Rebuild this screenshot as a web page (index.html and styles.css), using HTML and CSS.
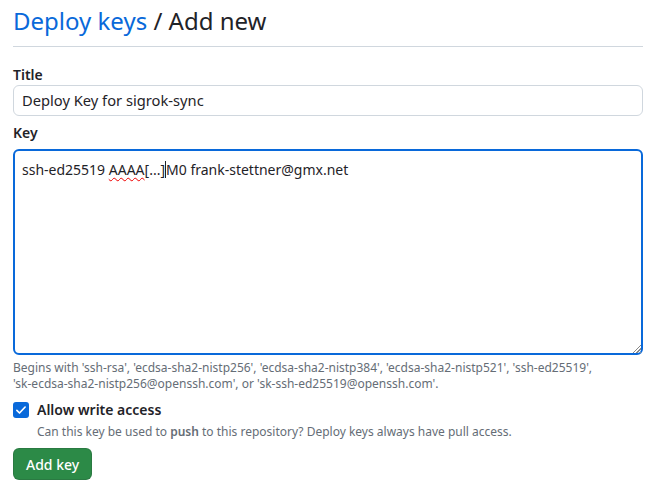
FILE: index.html
```html
<!DOCTYPE html>
<html>
<head>
<meta charset="utf-8">
<link rel="stylesheet" href="styles.css">
</head>
<body>
<div class="page">
  <div class="subhead">
    <h2 class="subhead-heading"><a href="#" class="crumb">Deploy keys</a> / Add new</h2>
  </div>
  <form class="form">
    <div class="form-group group-title">
      <label class="label label-title">Title</label>
      <div class="input">Deploy Key for sigrok-sync</div>
    </div>
    <div class="form-group group-key">
      <label class="label label-key">Key</label>
      <div class="textarea">ssh-ed25519 <span class="spell">AAAA</span>[...]<span class="caret"></span>M0 frank-stettner@gmx.net<span class="grip"></span></div>
      <p class="note">Begins with 'ssh-rsa', 'ecdsa-sha2-nistp256', 'ecdsa-sha2-nistp384', 'ecdsa-sha2-nistp521', 'ssh-ed25519', <span class="nowrap">'sk-ecdsa-sha2-nistp256@openssh.com',</span> or <span class="nowrap">'sk-ssh-ed25519@openssh.com'.</span></p>
    </div>
    <div class="check">
      <span class="checkbox"><svg width="12" height="12" viewBox="0 0 16 16"><path d="M2.5 8.5l3.5 3.5 7.5-8" fill="none" stroke="#fff" stroke-width="2.2" stroke-linecap="round" stroke-linejoin="round"/></svg></span>
      <div class="check-body">
        <div class="check-label">Allow write access</div>
        <div class="check-note">Can this key be used to <b>push</b> to this repository? Deploy keys always have pull access.</div>
      </div>
    </div>
    <button type="button" class="btn">Add key</button>
  </form>
</div>
</body>
</html>
```
FILE: styles.css
```css
* { box-sizing: border-box; }
html, body { margin: 0; background: #fff; }
body {
  font-family: "Noto Sans", "Open Sans", sans-serif;
  font-size: 14px;
  color: #1f2328;
}
.page { padding: 0 22px 0 13px; }
.subhead {
  border-bottom: 1px solid #d0d7de;
  padding: 4px 0 8px;
  margin-bottom: 18px;
}
.subhead-heading {
  margin: 0;
  font-size: 24px;
  font-weight: 400;
  line-height: 34px;
}
.crumb { color: #0969da; text-decoration: none; }
.form-group { margin: 0; }
.group-title { margin-bottom: 7px; }
.label {
  display: block;
  font-weight: 600;
  font-size: 14px;
  line-height: 20px;
}
.label-key { margin-bottom: 6px; }
.input {
  height: 31px;
  border: 1px solid #d0d7de;
  border-radius: 6px;
  padding: 0 8px;
  line-height: 29px;
  font-size: 14.7px;
  color: #1f2328;
  background: #fff;
}
.textarea {
  position: relative;
  height: 206px;
  border: 2px solid #0969da;
  border-radius: 6px;
  padding: 9px 7px;
  line-height: 20px;
  font-size: 14px;
}
.spell {
  text-decoration: underline wavy #e00;
  text-decoration-thickness: 1px;
  text-underline-offset: 2px;
}
.caret {
  display: inline-block;
  width: 1px;
  height: 17px;
  background: #1f2328;
  vertical-align: -3px;
}
.grip {
  position: absolute;
  right: 0;
  bottom: 0;
  width: 9px;
  height: 9px;
  background: repeating-linear-gradient(135deg, transparent 0 1.5px, #888 1.5px 2.5px);
  clip-path: polygon(100% 0, 100% 100%, 0 100%);
}
.note {
  margin: 5px 0 0;
  font-size: 12px;
  line-height: 16px;
  color: #656d76;
}
.nowrap { white-space: nowrap; }
.check {
  display: flex;
  gap: 8px;
  margin-top: 8px;
}
.checkbox {
  flex: none;
  width: 16px;
  height: 16px;
  margin-top: 2px;
  border-radius: 3px;
  background: #0969da;
  display: flex;
  align-items: center;
  justify-content: center;
}
.check-label { font-weight: 600; line-height: 20px; }
.check-note {
  margin-top: 4px;
  font-size: 12px;
  line-height: 16px;
  color: #656d76;
}
.check-note b { font-weight: 600; }
.btn {
  display: block;
  margin-top: 8px;
  height: 32px;
  padding: 0 12px;
  border: 1px solid rgba(31,35,40,0.15);
  border-radius: 6px;
  background: #2c8a47;
  color: #fff;
  font-family: inherit;
  font-size: 14px;
  font-weight: 500;
}
```
